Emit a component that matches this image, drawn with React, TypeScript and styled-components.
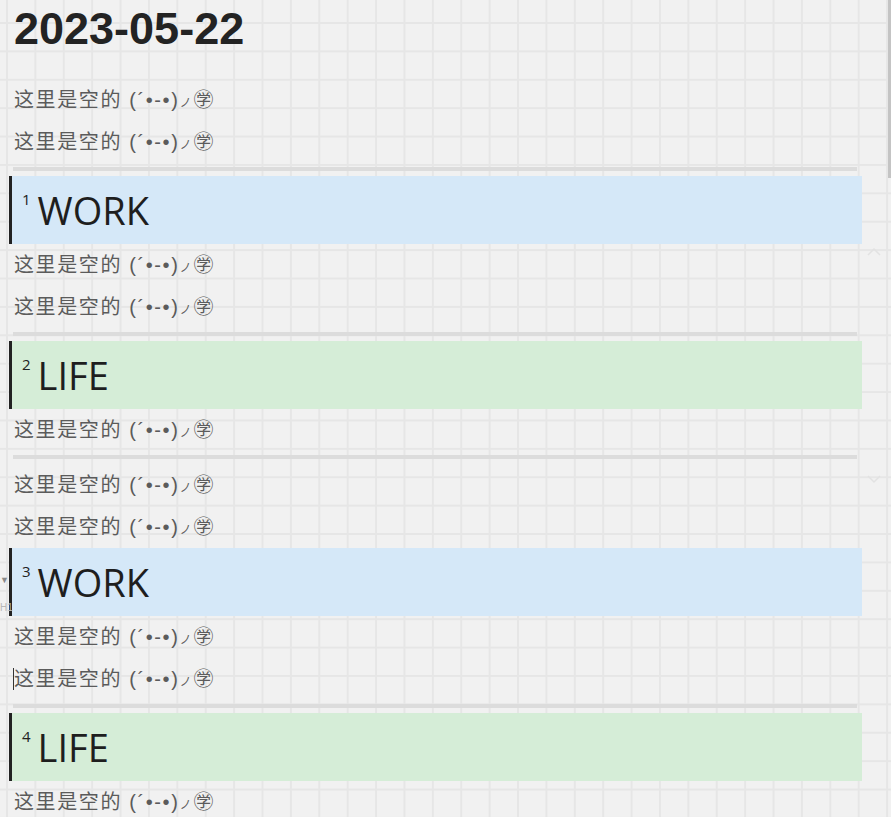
import styled, { createGlobalStyle } from 'styled-components'

const GlobalStyle = createGlobalStyle`
    html, body {
        margin: 0;
        padding: 0;
    }
    body {
        background-color: #f1f1f1;
        font-family: "Liberation Sans", "Noto Sans CJK SC", sans-serif;
        overflow: hidden;
    }
`

const Page = styled.div`
    position: relative;
    min-height: 100vh;
    background-color: #f1f1f1;
    background-image:
        linear-gradient(to right, #e6e6e6 2px, transparent 2px),
        linear-gradient(to bottom, #e6e6e6 2px, transparent 2px);
    background-size: 28.4px 28.4px;
    background-position: 6px 22px;
`

const Content = styled.div`
    display: flex;
    flex-direction: column;
    width: 853px;
    padding-left: 9px;
`

const Title = styled.h1`
    margin: 0 0 21px 0;
    padding-left: 5px;
    font-size: 45px;
    line-height: 58px;
    font-weight: 700;
    color: #232323;
`

const P = styled.p`
    display: flex;
    align-items: center;
    margin: 0;
    height: 42px;
    padding-left: 5px;
    font-size: 20px;
    line-height: 26px;
    letter-spacing: 1.6px;
    color: #5b5b5b;
    font-family: "Liberation Sans", "Noto Sans CJK SC", sans-serif;
    white-space: pre;
`

const Kana = styled.span`
    font-size: 12px;
    line-height: 12px;
    margin-top: 5px;
    letter-spacing: 2px;
`

const Caret = styled.span`
    display: inline-block;
    width: 0;
    height: 22px;
    border-left: 1px solid #333;
    margin-left: -1px;
`

const Rule = styled.div`
    height: 4px;
    margin: 4px 5px 5px 4px;
    background-color: #dcdcdc;
`

interface HeadingProps {
    tone: 'work' | 'life'
}

const Heading = styled.h2<HeadingProps>`
    position: relative;
    margin: 0;
    height: 68px;
    padding-left: 10px;
    border-left: 3px solid #222;
    background-color: ${({ tone }) => (tone === 'work' ? '#d5e8f8' : '#d5edd7')};
    font-family: "Open Sans", "Liberation Sans", sans-serif;
    font-size: 38px;
    line-height: 68px;
    font-weight: 400;
    color: #1e1e1e;
    white-space: nowrap;
`

const Num = styled.span`
    display: inline-block;
    font-size: 15px;
    line-height: 15px;
    vertical-align: 20px;
    margin-right: 7px;
    color: #222;
`

const Gutter = styled.div`
    position: absolute;
    left: -12px;
    top: 0;
    width: 9px;
    height: 68px;
    display: flex;
    flex-direction: column;
    align-items: flex-start;
    font-family: "Liberation Sans", sans-serif;
    font-size: 10px;
    line-height: 10px;
    color: #b8b8b8;
    span:first-child {
        margin-top: 27px;
        color: #8a8a8a;
        font-size: 9px;
    }
    span:last-child {
        margin-top: 18px;
    }
`

const Scrollbar = styled.div`
    position: absolute;
    top: 0;
    right: 0;
    width: 3px;
    height: 178px;
    background-color: #c4c4c4;
`

const Fold = styled.svg<{ top: number }>`
    position: absolute;
    left: 866px;
    top: ${({ top }) => top}px;
    width: 16px;
    height: 10px;
`

function Line({ caret }: { caret?: boolean }) {
    return (
        <P>
            {caret && <Caret />}
            <span>这里是空的 (´•-•)</span>
            <Kana>ノ</Kana>
            <span>㊫</span>
        </P>
    )
}

function Block({ n, label, tone, marker }: { n: number; label: string; tone: 'work' | 'life'; marker?: boolean }) {
    return (
        <Heading tone={tone}>
            {marker && (
                <Gutter>
                    <span>▼</span>
                    <span>H1</span>
                </Gutter>
            )}
            <Num>{n}</Num>
            {label}
        </Heading>
    )
}

export default function App() {
    return (
        <Page>
            <GlobalStyle />
            <Content>
                <Title>2023-05-22</Title>
                <Line />
                <Line />
                <Rule />
                <Block n={1} label="WORK" tone="work" />
                <Line />
                <Line />
                <Rule />
                <Block n={2} label="LIFE" tone="life" />
                <Line />
                <Rule />
                <Line />
                <Line />
                <Block n={3} label="WORK" tone="work" marker />
                <Line />
                <Line caret />
                <Rule />
                <Block n={4} label="LIFE" tone="life" />
                <Line />
            </Content>
            <Fold top={247} viewBox="0 0 16 10">
                <path d="M2 8 L8 2 L14 8" fill="none" stroke="#e2e2e2" strokeWidth="1.5" />
            </Fold>
            <Fold top={474} viewBox="0 0 16 10">
                <path d="M2 2 L8 8 L14 2" fill="none" stroke="#e2e2e2" strokeWidth="1.5" />
            </Fold>
            <Scrollbar />
        </Page>
    )
}
